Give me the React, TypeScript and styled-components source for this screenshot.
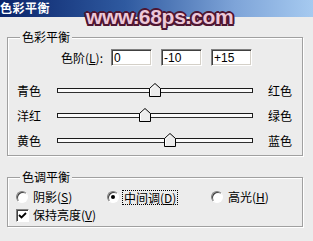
import styled, { createGlobalStyle } from "styled-components";

const GlobalStyle = createGlobalStyle`
  html, body {
    margin: 0;
    padding: 0;
    background: #ececec;
  }
  body {
    font-family: "Noto Sans CJK SC", "Liberation Sans", sans-serif;
    font-size: 12px;
    color: #000;
  }
`;

const Dialog = styled.div`
  position: relative;
  width: 313px;
  height: 241px;
  overflow: hidden;
  background: #ececec;
`;

const TitleBar = styled.div`
  height: 17px;
  background: linear-gradient(to right, #0a246a 0%, #2f5aa0 40%, #7ea4d8 75%, #a6caf0 100%);
  color: #fff;
  font-weight: bold;
  font-size: 12px;
  line-height: 16px;
  letter-spacing: 0.5px;
`;

const Watermark = styled.div`
  position: absolute;
  left: 86px;
  top: 5px;
  font-family: "Liberation Sans", Arial, sans-serif;
  font-weight: bold;
  font-size: 21px;
  line-height: 24px;
  color: #ecc8d8;
  letter-spacing: -0.3px;
  text-shadow:
    -1.5px -1.5px 0 #4e1632,
    1.5px -1.5px 0 #4e1632,
    -1.5px 1.5px 0 #4e1632,
    1.5px 1.5px 0 #4e1632,
    0 -2px 0 #4e1632,
    0 2px 0 #4e1632,
    -2px 0 0 #4e1632,
    2px 0 0 #4e1632;
`;

const Body = styled.div`
  padding: 13px 10px 0 7px;
  display: flex;
  flex-direction: column;
  gap: 14px;
`;

const Group = styled.fieldset<{ $bottom: number }>`
  margin: 0;
  padding: 0 0 ${(p) => p.$bottom}px 0;
  min-width: 0;
  border: 1px solid #a0a0a0;
  box-shadow: inset 1px 1px 0 #fff, 1px 1px 0 #fff;
`;

const Legend = styled.legend`
  margin-left: 12px;
  padding: 0 2px;
  line-height: 14px;
  background: #ececec;
`;

const Key = styled.u`
  text-underline-offset: 1px;
`;

const LevelRow = styled.div`
  display: flex;
  align-items: center;
  gap: 9px;
  height: 17px;
  margin-top: 5px;
`;

const LevelLabel = styled.label`
  width: 95px;
  text-align: right;
  margin-right: -1px;
`;

const LevelInput = styled.input`
  box-sizing: border-box;
  width: 41px;
  height: 17px;
  margin: 0;
  padding: 0 2px;
  font-family: "Liberation Sans", Arial, sans-serif;
  font-size: 12px;
  color: #000;
  background: #fff;
  border: 1px solid;
  border-color: #808080 #fff #fff #808080;
  box-shadow: inset 1px 1px 0 #404040, inset -1px -1px 0 #d4d0c8;
  outline: none;
`;

const Sliders = styled.div`
  margin-top: 12px;
  display: flex;
  flex-direction: column;
`;

const SliderRow = styled.div`
  display: grid;
  grid-template-columns: 40px 196px 1fr;
  align-items: center;
  height: 25px;
  padding-left: 9px;
`;

const SideLabel = styled.span<{ $right?: boolean }>`
  padding-left: ${(p) => (p.$right ? 15 : 0)}px;
  line-height: 14px;
`;

const Track = styled.div`
  position: relative;
  box-sizing: border-box;
  height: 5px;
  background: #fafafa;
  border: 1px solid #1a1a1a;
  border-bottom-color: #303030;
`;

const Thumb = styled.svg`
  position: absolute;
  top: -6px;
  width: 12px;
  height: 14px;
  transform: translateX(-50%);
`;

const RadioRow = styled.div`
  display: grid;
  grid-template-columns: 91px 104px auto;
  align-items: center;
  height: 16px;
  margin-top: 5px;
  padding-left: 8px;
`;

const Option = styled.label`
  display: flex;
  align-items: center;
  gap: 5px;
  line-height: 14px;
`;

const Radio = styled.span<{ $checked?: boolean }>`
  position: relative;
  box-sizing: border-box;
  width: 12px;
  height: 12px;
  border-radius: 50%;
  background: #fff;
  border: 1px solid;
  border-color: #808080 #fff #fff #808080;
  box-shadow: inset 1px 1px 0 #404040;

  &::after {
    content: "";
    display: ${(p) => (p.$checked ? "block" : "none")};
    position: absolute;
    left: 3px;
    top: 3px;
    width: 4px;
    height: 4px;
    border-radius: 50%;
    background: #000;
  }
`;

const FocusText = styled.span`
  margin-left: -2px;
  padding: 0 1px;
  border: 1px dotted #000;
  line-height: 13px;
`;

const CheckRow = styled(Option)`
  margin-top: 3px;
  padding-left: 8px;
  gap: 4px;
`;

const Checkbox = styled.span`
  box-sizing: border-box;
  display: flex;
  width: 13px;
  height: 13px;
  background: #fff;
  border: 1px solid;
  border-color: #808080 #fff #fff #808080;
  box-shadow: inset 1px 1px 0 #404040;
`;

const sliders = [
  { left: "青色", right: "红色", value: 0 },
  { left: "洋红", right: "绿色", value: -10 },
  { left: "黄色", right: "蓝色", value: 15 },
];

export default function App() {
  return (
    <Dialog>
      <GlobalStyle />
      <TitleBar>色彩平衡</TitleBar>
      <Watermark>www.68ps.com</Watermark>
      <Body>
        <Group $bottom={2}>
          <Legend>色彩平衡</Legend>
          <LevelRow>
            <LevelLabel>
              色阶(<Key>L</Key>):
            </LevelLabel>
            {sliders.map((s) => (
              <LevelInput
                key={s.left}
                readOnly
                value={s.value > 0 ? `+${s.value}` : String(s.value)}
              />
            ))}
          </LevelRow>
          <Sliders>
            {sliders.map((s) => (
              <SliderRow key={s.left}>
                <SideLabel>{s.left}</SideLabel>
                <Track>
                  <Thumb
                    viewBox="0 0 12 14"
                    style={{ left: `${(s.value + 100) / 2}%` }}
                  >
                    <polygon
                      points="6,0.5 11.5,5.5 11.5,13.5 0.5,13.5 0.5,5.5"
                      fill="#ececec"
                      stroke="#000"
                      strokeWidth="1"
                    />
                    <polyline
                      points="1.5,12.5 1.5,6 6,2"
                      fill="none"
                      stroke="#fff"
                      strokeWidth="1"
                    />
                  </Thumb>
                </Track>
                <SideLabel $right>{s.right}</SideLabel>
              </SliderRow>
            ))}
          </Sliders>
        </Group>
        <Group $bottom={4}>
          <Legend>色调平衡</Legend>
          <RadioRow>
            <Option>
              <Radio />
              <span>
                阴影(<Key>S</Key>)
              </span>
            </Option>
            <Option>
              <Radio $checked />
              <FocusText>
                中间调(<Key>D</Key>)
              </FocusText>
            </Option>
            <Option>
              <Radio />
              <span>
                高光(<Key>H</Key>)
              </span>
            </Option>
          </RadioRow>
          <CheckRow>
            <Checkbox>
              <svg width="11" height="11" viewBox="0 0 11 11">
                <path
                  d="M2 5 L4.5 7.5 L9 3"
                  fill="none"
                  stroke="#000"
                  strokeWidth="1.8"
                />
              </svg>
            </Checkbox>
            <span>
              保持亮度(<Key>V</Key>)
            </span>
          </CheckRow>
        </Group>
      </Body>
    </Dialog>
  );
}
